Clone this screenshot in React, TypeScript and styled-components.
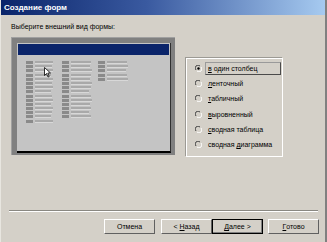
import styled, { createGlobalStyle } from "styled-components";

const GlobalStyle = createGlobalStyle`
  html, body {
    margin: 0;
    padding: 0;
    background: #d4d0c8;
    overflow: hidden;
  }
  body {
    font-family: "Liberation Sans", Arial, sans-serif;
    font-size: 7px;
    color: #000;
  }
`;

const Window = styled.div`
  width: 327px;
  height: 242px;
  box-sizing: border-box;
  display: flex;
  flex-direction: column;
  background: #d4d0c8;
  border-left: 1px solid #e8e6e0;
  border-right: 2px solid #808080;
`;

const TitleBar = styled.div`
  height: 15px;
  flex-shrink: 0;
  display: flex;
  align-items: center;
  padding-left: 3px;
  background: linear-gradient(to right, #0a246a 0%, #3a5aa0 45%, #a6caf0 100%);
  color: #fff;
  font-weight: bold;
  font-size: 8px;
`;

const Body = styled.div`
  flex: 1;
  display: flex;
  flex-direction: column;
  padding: 7px 0 0 10px;
`;

const Prompt = styled.div`
  line-height: 10px;
  height: 10px;
`;

const MainRow = styled.div`
  display: flex;
  align-items: flex-start;
  margin-top: 5px;
`;

const Preview = styled.div`
  width: 164px;
  height: 118px;
  box-sizing: border-box;
  background: #808080;
  padding: 5px 4px 0 5px;
  border-top: 1px solid #a0a0a0;
  border-left: 1px solid #a0a0a0;
`;

const Screen = styled.div`
  position: relative;
  height: 110px;
  box-sizing: border-box;
  background: #c4c4c4;
  padding: 1px;
  border-bottom: 2px solid #000;
  border-right: 1px solid #303030;
`;

const HeaderBar = styled.div`
  height: 11px;
  background: #0a246a;
`;

const Columns = styled.div`
  display: flex;
  padding: 6px 0 0 8px;
`;

const FieldColumn = styled.div`
  width: 36px;
  display: flex;
  flex-direction: column;
  gap: 1.2px;
`;

const FieldRow = styled.div`
  display: flex;
  gap: 2px;
  height: 3px;
`;

const FieldLabel = styled.div`
  width: 7px;
  background: #8a8a8a;
`;

const FieldBox = styled.div<{ $w: number }>`
  width: ${(p) => p.$w}px;
  background: #a9a9a9;
  border-bottom: 1px solid #d8d8d8;
  box-sizing: border-box;
`;

const Cursor = styled.svg`
  position: absolute;
  left: 27px;
  top: 24px;
`;

const OptionsGroup = styled.div`
  margin: 21px 0 0 11px;
  width: 97px;
  height: 99px;
  box-sizing: border-box;
  border: 1px solid #ffffff;
  box-shadow: -1px -1px 0 #9c9a94;
  padding: 2px 0 0 8px;
  display: flex;
  flex-direction: column;
`;

const OptionRow = styled.div`
  height: 15.2px;
  display: flex;
  align-items: center;
  gap: 3px;
  white-space: nowrap;
`;

const OptionLabel = styled.span<{ $focused?: boolean }>`
  padding: 1px 2px;
  line-height: 9px;
  border: 1px solid ${(p) => (p.$focused ? "#4a4a4a" : "transparent")};
  border-top-color: ${(p) => (p.$focused ? "#9a9a9a" : "transparent")};
  border-left-color: ${(p) => (p.$focused ? "#9a9a9a" : "transparent")};
  width: ${(p) => (p.$focused ? "70px" : "auto")};
`;

const Spacer = styled.div`
  flex: 1;
`;

const Separator = styled.div`
  margin: 0 7px 0 -2px;
  border-top: 1px solid #8a8882;
  border-bottom: 1px solid #ffffff;
`;

const ButtonRow = styled.div`
  display: flex;
  justify-content: flex-end;
  padding: 7px 6px 8px 0;
`;

const Button = styled.div<{ $default?: boolean; $gap?: number }>`
  width: 51px;
  height: 15px;
  box-sizing: border-box;
  margin-left: ${(p) => p.$gap ?? 0}px;
  display: flex;
  align-items: center;
  justify-content: center;
  background: #d4d0c8;
  border: 1px solid;
  border-color: ${(p) =>
    p.$default ? "#000" : "#ffffff #606060 #606060 #ffffff"};
  box-shadow: ${(p) => (p.$default ? "inset -1px -1px 0 #808080" : "none")};
`;

function Radio({ checked }: { checked?: boolean }) {
  return (
    <svg width="7" height="7" viewBox="0 0 7 7">
      <path d="M1 5 A2.6 2.6 0 0 1 5 1" fill="none" stroke="#404040" strokeWidth="1" />
      <path d="M6 2 A2.6 2.6 0 0 1 2 6" fill="none" stroke="#ffffff" strokeWidth="1" />
      {checked && <circle cx="3.5" cy="3.5" r="1.2" fill="#000" />}
    </svg>
  );
}

const columns = [
  [18, 17, 18, 16, 18, 17, 18, 16, 17, 18, 16, 18, 17, 16, 18],
  [20, 19, 21, 20, 19, 21, 20, 18, 20, 21, 19, 20, 18, 20],
  [20, 21, 19, 20, 21],
];

const options = [
  { pre: "", key: "в", rest: " один столбец" },
  { pre: "", key: "л", rest: "енточный" },
  { pre: "", key: "т", rest: "абличный" },
  { pre: "", key: "в", rest: "ыровненный" },
  { pre: "", key: "с", rest: "водная таблица" },
  { pre: "сводная ", key: "д", rest: "иаграмма" },
];

export default function App() {
  return (
    <>
      <GlobalStyle />
      <Window>
        <TitleBar>Создание форм</TitleBar>
        <Body>
          <Prompt>Выберите внешний вид формы:</Prompt>
          <MainRow>
            <Preview>
              <Screen>
                <HeaderBar />
                <Columns>
                  {columns.map((col, ci) => (
                    <FieldColumn key={ci}>
                      {col.map((w, ri) => (
                        <FieldRow key={ri}>
                          <FieldLabel />
                          <FieldBox $w={w} />
                        </FieldRow>
                      ))}
                    </FieldColumn>
                  ))}
                </Columns>
                <Cursor width="7" height="11" viewBox="0 0 7 11">
                  <path d="M0.5 0.5 L0.5 8.5 L2.5 6.5 L4 10 L5.2 9.5 L3.8 6 L6.5 6 Z" fill="#fff" stroke="#000" strokeWidth="0.8" />
                </Cursor>
              </Screen>
            </Preview>
            <OptionsGroup>
              {options.map((o, i) => (
                <OptionRow key={i}>
                  <Radio checked={i === 0} />
                  <OptionLabel $focused={i === 0}>
                    {o.pre}
                    <u>{o.key}</u>
                    {o.rest}
                  </OptionLabel>
                </OptionRow>
              ))}
            </OptionsGroup>
          </MainRow>
          <Spacer />
          <Separator />
          <ButtonRow>
            <Button>Отмена</Button>
            <Button $gap={6}>
              &lt;&nbsp;<u>Н</u>азад
            </Button>
            <Button $default>
              <u>Д</u>алее&nbsp;&gt;
            </Button>
            <Button $gap={5}>
              <u>Г</u>отово
            </Button>
          </ButtonRow>
        </Body>
      </Window>
    </>
  );
}
